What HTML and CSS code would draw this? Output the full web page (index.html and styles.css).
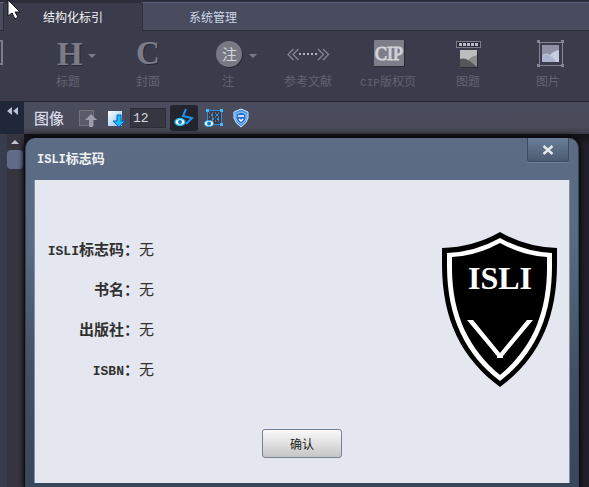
FILE: index.html
```html
<!DOCTYPE html>
<html lang="zh-CN">
<head>
<meta charset="utf-8">
<title>ISLI标志码</title>
<link rel="stylesheet" href="styles.css">
</head>
<body>
<nav class="tabs">
  <button class="tab tab-active" type="button">结构化标引</button>
  <button class="tab" type="button">系统管理</button>
</nav>

<div class="ribbon">
  <div class="ribbon-edge">
    <svg width="4" height="32" viewBox="0 0 4 32"><path d="M0 4H2V27H0" fill="none" stroke="#7b7c87" stroke-width="2"/></svg>
  </div>
  <button class="tool" type="button">
    <svg width="60" height="32" viewBox="0 0 60 32"><text class="glyph glyph-shade" x="20" y="29">H</text><text class="glyph" x="19" y="28">H</text><path d="M50 17h8l-4 4z" fill="#7b7c87"/></svg>
    <span>标题</span>
  </button>
  <button class="tool" type="button">
    <svg width="60" height="32" viewBox="0 0 60 32"><text class="glyph glyph-shade" x="19" y="28">C</text><text class="glyph" x="18" y="27">C</text></svg>
    <span>封面</span>
  </button>
  <button class="tool" type="button">
    <svg width="60" height="32" viewBox="0 0 60 32"><circle cx="32" cy="18" r="13" fill="#2b2c38"/><circle cx="31" cy="17" r="13" fill="#777985"/><text class="note" x="24" y="23">注</text><path d="M51 17h8l-4 4z" fill="#7b7c87"/></svg>
    <span>注</span>
  </button>
  <button class="tool" type="button">
    <svg width="60" height="32" viewBox="0 0 60 32"><g fill="none" stroke="#868792" stroke-width="1.300"><path d="M15.500 12L10 17.500L15.500 23M20.500 12L15 17.500L20.500 23M40 12L45.500 17.500L40 23M45 12L50.500 17.500L45 23"/></g><path d="M21 17h18" stroke="#b0b1bc" stroke-width="2" stroke-dasharray="2 2"/></svg>
    <span>参考文献</span>
  </button>
  <button class="tool" type="button">
    <svg width="60" height="32" viewBox="0 0 60 32"><rect x="17" y="4" width="30" height="26" rx="1" fill="#292a35"/><rect x="16" y="3" width="30" height="26" rx="1" fill="#7c7f89"/><text class="cip" x="31" y="23">CIP</text></svg>
    <span><span class="latin-s">CIP</span>版权页</span>
  </button>
  <button class="tool" type="button">
    <svg width="60" height="32" viewBox="0 0 60 32"><rect x="18.500" y="4.500" width="24" height="6" fill="#2c2d3a" stroke="#7d7e8a"/><path d="M21 7.500h20" stroke="#b9bac5" stroke-width="3" stroke-dasharray="3 1"/><rect x="23" y="14" width="17" height="17" fill="#292a33"/><rect x="22" y="13" width="17" height="17" fill="#bcbdbd"/><path d="M22 22q5-2 8 1q4-4 9-5v12H22z" fill="#8a8b8c"/><path d="M22 22q7-2 17 8H22z" fill="#555659"/></svg>
    <span>图题</span>
  </button>
  <button class="tool" type="button">
    <svg width="60" height="32" viewBox="0 0 60 32"><path d="M21.500 4v25M44.500 4v25M20 5.500h26M20 28.500h26" stroke="#858693"/><path d="M19 3h3v3h-3zM43 3h3v3h-3zM19 27h3v3h-3zM43 27h3v3h-3z" fill="#858693"/><rect x="24" y="8" width="17" height="17" fill="#9091a6"/><path d="M24 18q4-3 8 0q3-4 9-5v12H24z" fill="#c9cce0"/><path d="M24 18q8-3 14 7H24z" fill="#adb3ce"/></svg>
    <span>图片</span>
  </button>
</div>

<main class="workspace">
  <aside class="side">
    <button class="collapse" type="button" aria-label="收起">
      <svg width="12" height="8" viewBox="0 0 12 8"><path d="M5 0v8L0 4zM11 0v8L6 4z" fill="#b9c2d6"/></svg>
    </button>
    <div class="scroll">
      <svg width="16" height="16" viewBox="0 0 16 16"><path d="M4 10l4-4 4 4z" fill="#c2c4cf"/></svg>
      <div class="thumb"></div>
    </div>
  </aside>

  <div class="canvas">
    <div class="toolbar">
      <label class="toolbar-title" for="size">图像</label>
      <button class="mini" type="button" aria-label="上移">
        <svg width="20" height="20" viewBox="0 0 20 20"><rect x="1.500" y="2.500" width="14" height="15" fill="#5a5b69" stroke="#71727e"/><path d="M13 6l6 6h-4v7h-4v-7H7z" fill="#9b9ca8"/></svg>
      </button>
      <button class="mini" type="button" aria-label="下移">
        <svg width="20" height="20" viewBox="0 0 20 20"><defs><linearGradient id="page" x2="1" y2="1"><stop stop-color="#fff"/><stop offset="1" stop-color="#89bdf1"/></linearGradient></defs><path d="M2 3h14v15H2z" fill="url(#page)"/><path d="M11 7h4v6h4l-6 6-6-6h4z" fill="#18bdf1" stroke="#075cc1"/></svg>
      </button>
      <input class="size" id="size" type="text" value="12">
      <button class="mini mini-on" type="button" aria-label="折线">
        <svg width="20" height="20" viewBox="0 0 20 20"><path d="M12 1L9 8l9 2-6 6" fill="none" stroke="#2290ef" stroke-width="2"/><ellipse cx="6" cy="14" rx="5" ry="3.500" fill="#e7fbff" stroke="#29b7e7" stroke-width="1.500"/><circle cx="6" cy="14" r="2" fill="#1577bd"/></svg>
      </button>
      <button class="mini" type="button" aria-label="区域">
        <svg width="20" height="20" viewBox="0 0 20 20"><path d="M3.500 2.500h14v14h-14z" fill="#393b49" stroke="#328ce0"/><path d="M5 5h12M5 9h12M5 13h12" stroke="#a1a3b0" stroke-dasharray="1 2"/><path d="M7 7h10M8 11h8" stroke="#2f9dec" stroke-width="2" stroke-dasharray="2 3"/><path d="M2 1h3v3H2zM16 1h3v3h-3zM16 15h3v3h-3z" fill="#40b9ff"/><ellipse cx="5" cy="15.500" rx="4.500" ry="3" fill="#e7fbff" stroke="#29a7e7"/><circle cx="5" cy="15.500" r="2" fill="#1577bd"/></svg>
      </button>
      <button class="mini" type="button" aria-label="标志码">
        <svg width="20" height="20" viewBox="0 0 20 20"><path d="M9 1l7 3v6q-1 5-7 9q-6-4-7-9V4z" fill="#4794ea" stroke="#d3e8ff"/><path d="M9 4l5 2v5q-2 4-5 5q-3-1-5-5V6z" fill="#236fd0" stroke="#9bcafc"/><path d="M6 8h6M7 11l2 2 2-2" fill="none" stroke="#fff" stroke-width="1.500"/></svg>
      </button>
    </div>

    <div class="stage">
      <section class="dialog" role="dialog" aria-labelledby="dialog-title">
        <header class="dialog-head">
          <h1 id="dialog-title"><span class="latin-m">ISLI</span>标志码</h1>
          <button class="close" type="button" aria-label="关闭">
            <svg width="12" height="10" viewBox="0 0 12 10"><path d="M1.500 1L10.500 9M10.500 1L1.500 9" stroke="#e6e9e9" stroke-width="2.400"/></svg>
          </button>
        </header>
        <div class="dialog-body">
          <div class="info">
            <dl class="fields">
              <dt><span class="latin-l">ISLI</span>标志码：</dt><dd>无</dd>
              <dt>书名：</dt><dd>无</dd>
              <dt>出版社：</dt><dd>无</dd>
              <dt><span class="latin-l">ISBN</span>：</dt><dd>无</dd>
            </dl>
            <svg class="shield" width="116" height="156" viewBox="0 0 116 156">
              <path d="M58 0Q84 15 115 16V32C115 88 96 127 58 155C20 127 0 88 0 32V16Q32 15 58 0Z"/>
              <path d="M58 6Q83 20 110 21V34C110 86 92 123 58 149C24 123 5 86 5 34V21Q33 20 58 6Z" fill="#fff"/>
              <path d="M58 11Q82 24 105 25V36C105 84 88 118 58 143C28 118 10 84 10 36V25Q34 24 58 11Z"/>
              <text class="shield-text" x="58" y="57">ISLI</text>
              <path d="M25 88h6L58 121L85 88h6L61 124v2h-6v-2z" fill="#fff"/>
            </svg>
          </div>
          <button class="confirm" type="button">确认</button>
        </div>
      </section>
    </div>
  </div>
</main>

<svg class="cursor" width="14" height="22" viewBox="0 0 14 22"><path d="M1 0v16l4-3 3 6 3-2-3-5h5z" fill="#fff" stroke="#111622"/></svg>
</body>
</html>
```
FILE: styles.css
```css
* { box-sizing: border-box; }

body {
  margin: 0;
  min-height: 100vh;
  display: flex;
  flex-direction: column;
  overflow: hidden;
  background: #222129;
  font: 12px/16px "Noto Sans CJK SC", sans-serif;
}

button {
  border: 0;
  padding: 0;
  background: none;
  color: inherit;
  font: inherit;
}

svg {
  display: block;
  overflow: visible;
}

.latin-s, .latin-m, .latin-l { font-family: "Liberation Mono", monospace; }
.latin-s { font-size: 11px; }
.latin-m { font-size: 12px; }
.latin-l { font-size: 13px; }

.tabs {
  display: flex;
  height: 31px;
  padding-left: 3px;
  border-top: 2px solid #2b2d3b;
  border-bottom: 1px solid #2b2c38;
  background: #484c5e;
  box-shadow: inset 0 1px #5c607c;
}

.tab {
  width: 140px;
  height: 29px;
  color: #d0d6ea;
}

.tab-active {
  border: 1px solid #2b2d39;
  border-bottom: 0;
  border-radius: 3px 3px 0 0;
  background: #3a3c4c;
  color: #f2f3f7;
}

.ribbon {
  display: flex;
  height: 71px;
  padding-top: 6px;
  background: #3a3c4c;
  border-bottom: 1px solid #25262f;
}

.ribbon-edge { flex: 0 0 28px; }

.tool {
  flex: 0 0 80px;
  display: flex;
  flex-direction: column;
  align-items: center;
  gap: 4px;
  color: #62636f;
}

.glyph {
  font: bold 33px "Liberation Serif", serif;
  fill: #7b7c87;
}

.glyph-shade { fill: #292a35; }

.note {
  font: 15px "Noto Sans CJK SC", sans-serif;
  fill: #d5d6de;
}

.cip {
  font: 18px "Liberation Serif", serif;
  fill: #d2d3d9;
  stroke: #d2d3d9;
  stroke-width: 1px;
  text-anchor: middle;
}

.workspace {
  flex: 1;
  display: flex;
}

.side {
  flex: 0 0 24px;
  display: flex;
  flex-direction: column;
  background: #373d4d;
}

.collapse {
  height: 32px;
  padding: 5px 0 0 7px;
  display: flex;
  background: #1f2739;
}

.scroll {
  flex: 1;
  margin-left: 7px;
  background: #36343e;
}

.thumb {
  width: 16px;
  height: 19px;
  border-radius: 4px;
  background: #626b88;
}

.canvas {
  flex: 1;
  display: flex;
  flex-direction: column;
}

.toolbar {
  display: flex;
  align-items: center;
  height: 32px;
  padding-left: 10px;
  background: linear-gradient(#4a4d5e, #494a5a 80%, #3a3a46);
}

.toolbar-title {
  margin-right: 10px;
  color: #d5d9e5;
  font-size: 15px;
  font-weight: 500;
}

.mini {
  width: 28px;
  height: 26px;
  display: grid;
  place-items: center;
}

.mini-on {
  margin: 0 2px 0 4px;
  border-radius: 3px;
  background: #22242e;
}

.size {
  width: 36px;
  height: 20px;
  border: 1px solid #2c2d37;
  padding: 0 2px;
  background: #343641;
  color: #d6d8df;
  font: 13px "Liberation Mono", monospace;
}

.stage {
  flex: 1;
  display: flex;
  padding: 4px 10px 0 1px;
  background: linear-gradient(#121217, #222129 12px);
}

.dialog {
  flex: 1;
  display: flex;
  flex-direction: column;
  padding: 0 9px 4px;
  border: 1px solid #33435a;
  border-width: 0 1px;
  border-radius: 10px 10px 0 0;
  background: linear-gradient(#5b6c84, #596b82 100px, #3f5062 240px, #38475a);
  box-shadow: 0 0 5px 2px #08080c;
}

.dialog-head {
  display: flex;
  justify-content: space-between;
  height: 42px;
}

.dialog-head h1 {
  margin: 12px 0 0 2px;
  color: #f0f2f3;
  font-size: 13px;
  line-height: 16px;
}

.close {
  width: 42px;
  height: 24px;
  display: grid;
  place-items: center;
  border: 1px solid #3a4a60;
  border-top: 0;
  border-radius: 0 0 3px 3px;
  background: linear-gradient(#6a7f99, #4b5b70);
  box-shadow: 0 1px #71839a;
}

.dialog-body {
  flex: 1;
  display: flex;
  flex-direction: column;
  align-items: center;
  padding-top: 49px;
  background: #e4e7ef;
  box-shadow: 1px 0 #8492a4, -1px 0 #8492a4;
}

.info {
  align-self: stretch;
  display: flex;
  justify-content: space-between;
  padding-right: 11px;
}

.fields {
  display: grid;
  grid-template-columns: 104px auto;
  grid-auto-rows: 40px;
  margin: 0;
  color: #303030;
  font-size: 15px;
  line-height: 40px;
}

.fields dt {
  font-weight: bold;
  text-align: right;
}

.fields dd { margin: 0; }

.shield { margin-top: 3px; }

.shield-text {
  font: bold 32px "Liberation Serif", serif;
  fill: #fff;
  text-anchor: middle;
}

.confirm {
  width: 80px;
  height: 29px;
  margin-top: 40px;
  border: 1px solid #748298;
  border-radius: 3px;
  background: linear-gradient(#fafafa, #e0e0e0 50%, #c5c5c5);
  color: #222;
}

.cursor {
  position: absolute;
  left: 7px;
  top: 0;
}
```
